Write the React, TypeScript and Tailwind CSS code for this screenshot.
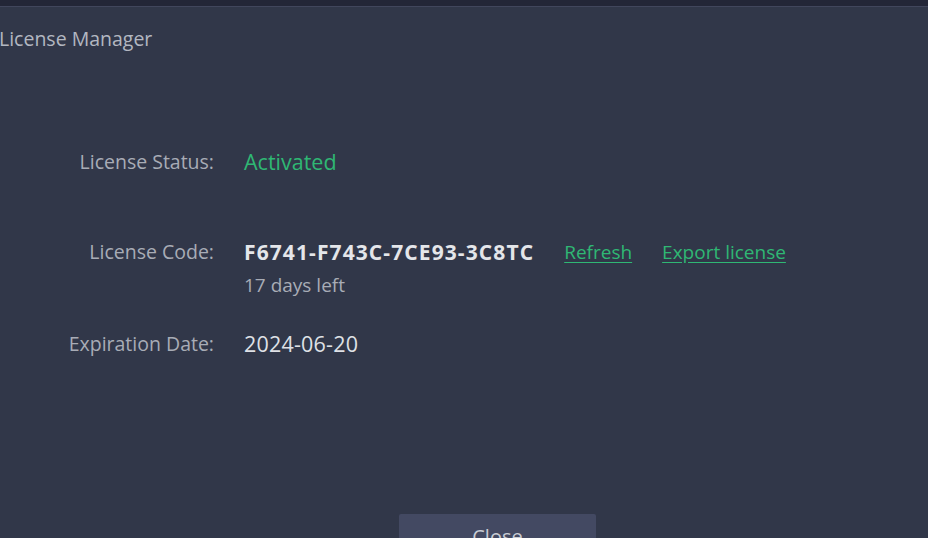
const App = () => {
  return (
    <div
      className="flex h-[538px] w-full flex-col overflow-hidden bg-[#313749]"
      style={{ fontFamily: '"Open Sans", "Noto Sans", sans-serif' }}
    >
      {/*Barra superior*/}
      <div className="h-[7px] w-full border-b border-[#41465c] bg-[#232637]" />

      {/*Titulo*/}
      <h1 className="-ml-[1px] mt-[18px] text-[19.5px] leading-[28px] text-[#b3b7c1]">
        License Manager
      </h1>

      {/*Datos de licencia*/}
      <div className="mt-[94px] grid grid-cols-[214px_1fr] gap-x-[30px]">
        <span className="text-right text-[19.5px] leading-[30px] text-[#a8acb6]">
          License Status:
        </span>
        <span className="text-[21.5px] leading-[30px] text-[#2fb774]">
          Activated
        </span>

        <span className="mt-[60px] text-right text-[19.5px] leading-[30px] text-[#a8acb6]">
          License Code:
        </span>
        <div className="mt-[60px] flex flex-col">
          <div className="flex items-center gap-[30px]">
            <span className="text-[21px] font-bold leading-[30px] tracking-[1.1px] text-[#e4e6ea]">
              F6741-F743C-7CE93-3C8TC
            </span>
            <a className="text-[19px] leading-[30px] text-[#2fb774] underline underline-offset-[3px]">
              Refresh
            </a>
            <a className="text-[19px] leading-[30px] text-[#2fb774] underline underline-offset-[3px]">
              Export license
            </a>
          </div>
          <span className="mt-[5px] text-[19px] leading-[26px] text-[#a8acb6]">
            17 days left
          </span>
        </div>

        <span className="mt-[31px] text-right text-[19.5px] leading-[30px] text-[#a8acb6]">
          Expiration Date:
        </span>
        <span className="mt-[31px] text-[21.5px] leading-[30px] tracking-[0.2px] text-[#dfe1e6]">
          2024-06-20
        </span>
      </div>

      {/*Boton*/}
      <div className="mt-auto flex pl-[399px]">
        <button className="h-[40px] w-[197px] translate-y-[16px] rounded-[2px] bg-[#434962] pt-[6px] text-[20px] text-[#c9ccd4]">
          Close
        </button>
      </div>
    </div>
  );
};

export default App;
